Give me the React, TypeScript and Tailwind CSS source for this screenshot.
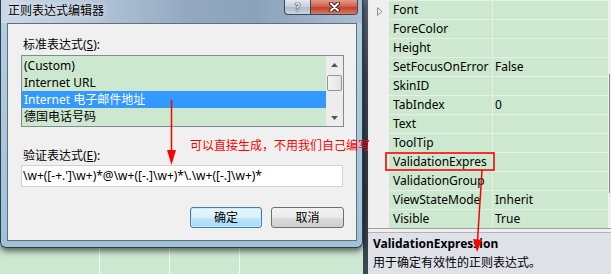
import React from 'react';

const presets = ['(Custom)', 'Internet URL', 'Internet 电子邮件地址', '德国电话号码'];

const props: [string, string][] = [
  ['Font', ''],
  ['ForeColor', ''],
  ['Height', ''],
  ['SetFocusOnError', 'False'],
  ['SkinID', ''],
  ['TabIndex', '0'],
  ['Text', ''],
  ['ToolTip', ''],
  ['ValidationExpres', ''],
  ['ValidationGroup', ''],
  ['ViewStateMode', 'Inherit'],
  ['Visible', 'True'],
];

const CaptionButtons = () => (
  <div className="flex mr-[4px] h-[15px]">
    <div className="w-[27px] h-full flex items-center justify-center border border-t-0 border-[#3b4856] rounded-bl-[4px] bg-[linear-gradient(180deg,#e3e9f0_0%,#c3ceda_50%,#aebccb_51%,#c9d4df_100%)]">
      <span className="text-[11px] leading-[14px] font-bold text-[#f5f5f5] [text-shadow:0_0_1px_#333,0_0_1px_#333,0_0_1px_#333]">?</span>
    </div>
    <div className="w-[47px] h-full flex items-center justify-center border border-t-0 border-l-0 border-[#3b4856] rounded-br-[4px] bg-[linear-gradient(180deg,#e49a88_0%,#d2624c_45%,#c0432c_55%,#d97a62_100%)]">
      <svg width="13" height="10" viewBox="0 0 13 10">
        <path d="M3 1.5 L10 8.5 M10 1.5 L3 8.5" stroke="#3a2a2a" strokeWidth="4" strokeLinecap="round" />
        <path d="M3 1.5 L10 8.5 M10 1.5 L3 8.5" stroke="#ffffff" strokeWidth="2" strokeLinecap="round" />
      </svg>
    </div>
  </div>
);

const PresetList = () => (
  <div className="ml-[13px] mt-[3px] w-[323px] h-[72px] border border-[#7f8b98] bg-[#cce8cf] flex">
    <div className="flex-1 pt-[1px]">
      {presets.map((p, i) => (
        <div
          key={p}
          className={`h-[17px] leading-[17px] pl-[2px] whitespace-nowrap ${i === 2 ? 'bg-[#3399ff] text-white' : ''}`}
        >
          {p}
        </div>
      ))}
    </div>
    <div className="w-[17px] flex flex-col bg-[#ededed]">
      <div className="h-[17px] flex items-center justify-center">
        <svg width="7" height="4" viewBox="0 0 7 4"><path d="M0 4 L3.5 0 L7 4 Z" fill="#555" /></svg>
      </div>
      <div className="mt-[2px] h-[16px] mx-[1px] rounded-[2px] border border-[#959595] bg-[linear-gradient(90deg,#f4f4f4,#e2e2e2)]" />
      <div className="flex-1" />
      <div className="h-[17px] flex items-center justify-center">
        <svg width="7" height="4" viewBox="0 0 7 4"><path d="M0 0 L7 0 L3.5 4 Z" fill="#555" /></svg>
      </div>
    </div>
  </div>
);

const Dialog = () => (
  <div className="relative z-10 h-[248px] flex flex-col border border-t-0 border-[#2f3b48] rounded-b-[6px] bg-[linear-gradient(180deg,#b4cfe2,#9fc2d8)] shadow-[0_3px_6px_rgba(0,0,0,0.6)]">
    <div className="h-[23px] flex items-start justify-between bg-[linear-gradient(90deg,#cbd8e7_0%,#b7c8da_22%,#93a8c0_52%,#8ca2bb_70%,#a9bdd2_100%)]">
      <span className="pl-[7px] pt-[4px] text-[12px] leading-[14px] text-black [text-shadow:0_0_6px_rgba(255,255,255,0.95)]">
        正则表达式编辑器
      </span>
      <CaptionButtons />
    </div>
    <div className="ml-[6px] mr-[5px] h-[218px] border border-[#5f7080] bg-[#f0f0f0] flex flex-col">
      <div className="mt-[14px] pl-[15px] h-[14px] leading-[14px] whitespace-nowrap">
        标准表达式(<span className="underline">S</span>):
      </div>
      <PresetList />
      <div className="mt-[22px] pl-[15px] h-[14px] leading-[14px] whitespace-nowrap">
        验证表达式(<span className="underline">E</span>):
      </div>
      <div className="ml-[13px] mt-[2px] w-[322px] h-[22px] border border-[#cfd3d8] bg-white pl-[1px] leading-[20px] whitespace-nowrap">
        {"\\w+([-+.']\\w+)*@\\w+([-.]\\w+)*\\.\\w+([-.]\\w+)*"}
      </div>
      <div className="mt-[20px] ml-[182px] flex gap-[9px]">
        <button className="w-[72px] h-[21px] rounded-[3px] border border-[#3c7fb1] bg-[linear-gradient(180deg,#eaf6fd_0%,#d9f0fc_50%,#bee6fd_51%,#a7d9f5_100%)] shadow-[inset_0_0_0_1px_#c8ecfc] leading-[19px]">
          确定
        </button>
        <button className="w-[73px] h-[21px] rounded-[3px] border border-[#707070] bg-[linear-gradient(180deg,#f2f2f2_0%,#ebebeb_50%,#dddddd_51%,#cfcfcf_100%)] leading-[19px]">
          取消
        </button>
      </div>
    </div>
  </div>
);

const Properties = () => (
  <div className="w-[243px] flex flex-col">
    <div className="h-[228px] flex">
      <div className="w-[21px] bg-[#efefef] pt-[7px] pl-[9px]">
        <svg width="6" height="9" viewBox="0 0 6 9">
          <path d="M0.5 0.5 L5 4.5 L0.5 8.5 Z" fill="none" stroke="#8f8f8f" strokeWidth="1" />
        </svg>
      </div>
      <div className="w-[219px] flex flex-col">
        {props.map(([name, value]) => (
          <div key={name} className="h-[19px] flex border-t border-[#eaeeea]">
            <div className="w-[103px] bg-[#cce8cf] pl-[4px] leading-[18px] whitespace-nowrap">{name}</div>
            <div className="w-[1px] bg-[#eaeeea]" />
            <div className="flex-1 bg-[#cce8cf] pl-[2px] leading-[18px] whitespace-nowrap">{value}</div>
          </div>
        ))}
      </div>
      <div className="w-[3px] bg-[#f0f0f0]">
        <div className="ml-[1px] mt-[74px] w-[1px] h-[119px] bg-[#8c8c8c]" />
      </div>
    </div>
    <div className="h-[1px] bg-[#a0a0a0]" />
    <div className="h-[3px] bg-[#f0f0f0]" />
    <div className="h-[1px] bg-[#b4b4b4]" />
    <div className="flex-1 bg-[#dfe1e8] pl-[5px] pt-[1px]">
      <div className="font-bold leading-[19px] whitespace-nowrap">ValidationExpression</div>
      <div className="leading-[19px] whitespace-nowrap">用于确定有效性的正则表达式。</div>
    </div>
  </div>
);

const Annotations = () => (
  <div className="absolute inset-0 z-20 pointer-events-none">
    <svg className="absolute inset-0" width="611" height="274" viewBox="0 0 611 274">
      <path d="M171.5 100 L171.5 152" stroke="#ff0000" strokeWidth="1.5" />
      <path d="M167 150 L176 150 L171.5 165 Z" fill="#ff0000" />
      <rect x="386" y="153" width="108" height="17" fill="none" stroke="#ff0000" strokeWidth="1.6" />
      <path d="M482 170 L477.5 241" stroke="#ff0000" strokeWidth="1.5" />
      <path d="M473 239 L482 240 L477 252 Z" fill="#ff0000" />
    </svg>
    <div className="absolute left-[190px] top-[139px] text-[12px] leading-[14px] text-[#ff0000] whitespace-nowrap">
      可以直接生成，不用我们自己编写
    </div>
  </div>
);

export default function App() {
  return (
    <div className="relative w-[611px] h-[274px] overflow-hidden flex bg-[#f0f0f0] text-[12px] text-black font-['Noto_Sans','Noto_Sans_CJK_SC',sans-serif]">
      <div className="w-[363px] flex flex-col bg-[#cde8d0]">
        <Dialog />
        <div className="flex-1 flex">
          <div className="w-[100px] border-r border-[#f4faf4]" />
          <div className="w-[70px] border-r border-[#f4faf4]" />
          <div className="w-[70px] border-r border-[#f4faf4]" />
          <div className="flex-1" />
        </div>
      </div>
      <div className="w-[5px] bg-[linear-gradient(180deg,#566579_0%,#3a4452_30%,#2f3743_70%,#3d4755_100%)]" />
      <Properties />
      <Annotations />
    </div>
  );
}
